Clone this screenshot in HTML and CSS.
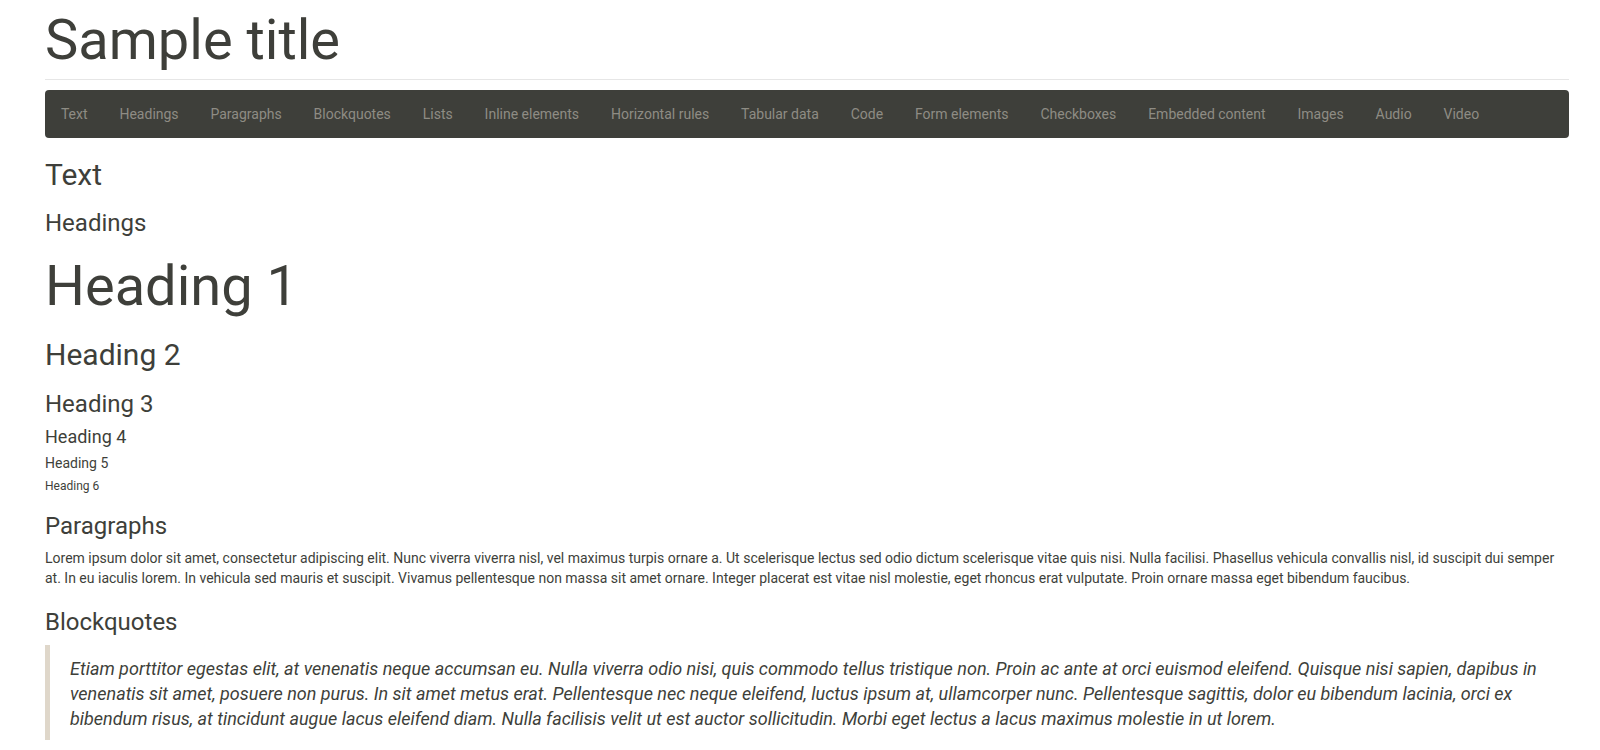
FILE: index.html
```html
<!DOCTYPE html>
<html lang="en">
<head>
<meta charset="utf-8">
<title>Sample title</title>
<link rel="stylesheet" href="styles.css">
</head>
<body>
<div class="container">
  <header class="page-header">
    <h1 class="title">Sample title</h1>
  </header>
  <nav class="navbar">
    <ul class="nav">
      <li><a href="#text">Text</a></li>
      <li><a href="#headings">Headings</a></li>
      <li><a href="#paragraphs">Paragraphs</a></li>
      <li><a href="#blockquotes">Blockquotes</a></li>
      <li><a href="#lists">Lists</a></li>
      <li><a href="#inline">Inline elements</a></li>
      <li><a href="#hr">Horizontal rules</a></li>
      <li><a href="#tables">Tabular data</a></li>
      <li><a href="#code">Code</a></li>
      <li><a href="#forms">Form elements</a></li>
      <li><a href="#checkboxes">Checkboxes</a></li>
      <li><a href="#embedded">Embedded content</a></li>
      <li><a href="#images">Images</a></li>
      <li><a href="#audio">Audio</a></li>
      <li><a href="#video">Video</a></li>
    </ul>
  </nav>
  <main class="content">
    <section id="text">
      <h2 class="h2">Text</h2>
      <section id="headings">
        <h3 class="h3">Headings</h3>
        <h1 class="h1">Heading 1</h1>
        <h2 class="h2">Heading 2</h2>
        <h3 class="h3">Heading 3</h3>
        <h4 class="h4">Heading 4</h4>
        <h5 class="h5">Heading 5</h5>
        <h6 class="h6">Heading 6</h6>
      </section>
      <section id="paragraphs">
        <h3 class="h3">Paragraphs</h3>
        <p class="para">Lorem ipsum dolor sit amet, consectetur adipiscing elit. Nunc viverra viverra nisl, vel maximus turpis ornare a. Ut scelerisque lectus sed odio dictum scelerisque vitae quis nisi. Nulla facilisi. Phasellus vehicula convallis nisl, id suscipit dui semper at. In eu iaculis lorem. In vehicula sed mauris et suscipit. Vivamus pellentesque non massa sit amet ornare. Integer placerat est vitae nisl molestie, eget rhoncus erat vulputate. Proin ornare massa eget bibendum faucibus.</p>
      </section>
      <section id="blockquotes">
        <h3 class="h3">Blockquotes</h3>
        <blockquote class="quote">
          <p>Etiam porttitor egestas elit, at venenatis neque accumsan eu. Nulla viverra odio nisi, quis commodo tellus tristique non. Proin ac ante at orci euismod eleifend. Quisque nisi sapien, dapibus in venenatis sit amet, posuere non purus. In sit amet metus erat. Pellentesque nec neque eleifend, luctus ipsum at, ullamcorper nunc. Pellentesque sagittis, dolor eu bibendum lacinia, orci ex bibendum risus, at tincidunt augue lacus eleifend diam. Nulla facilisis velit ut est auctor sollicitudin. Morbi eget lectus a lacus maximus molestie in ut lorem.</p>
        </blockquote>
      </section>
    </section>
  </main>
</div>
</body>
</html>
```
FILE: styles.css
```css
html, body {
  margin: 0;
  padding: 0;
}
body {
  font-family: Roboto, "Helvetica Neue", Arial, sans-serif;
  font-size: 14px;
  line-height: 1.428571;
  color: #3e3f3a;
  background: #ffffff;
}
.container {
  padding: 0 31px 0 45px;
}
.page-header {
  margin-top: 10px;
  padding-bottom: 7px;
  border-bottom: 1px solid #e6e6e6;
}
.title {
  margin: 0;
  font-size: 56px;
  font-weight: 400;
  line-height: 1.1;
}
.navbar {
  margin: 10px 0 20px;
  background: #3e3f3a;
  border-radius: 4px;
}
.nav {
  list-style: none;
  margin: 0;
  padding: 0;
  display: flex;
  flex-wrap: wrap;
}
.nav a {
  display: block;
  padding: 14px 15.95px;
  line-height: 20px;
  color: #8e8c84;
  text-decoration: none;
}
.h1, .h2, .h3, .h4, .h5, .h6 {
  font-weight: 400;
  line-height: 1.1;
  color: #3e3f3a;
}
.h1 { font-size: 56px; margin: 20px 0 10px; }
.h2 { font-size: 30px; margin: 20px 0 10px; }
.h3 { font-size: 24px; margin: 19.5px 0 10px; }
.h4 { font-size: 18px; margin: 10px 0 9px; }
.h5 { font-size: 14px; margin: 9px 0 9px; }
.h6 { font-size: 12px; margin: 9px 0 10px; }
.para {
  margin: 0 0 10px;
}
.quote {
  margin: 0 0 20px;
  padding: 11px 20px 9px;
  border-left: 5px solid #dfd7ca;
  font-size: 18px;
  font-style: italic;
  line-height: 25px;
}
.quote p {
  margin: 0;
}
```
